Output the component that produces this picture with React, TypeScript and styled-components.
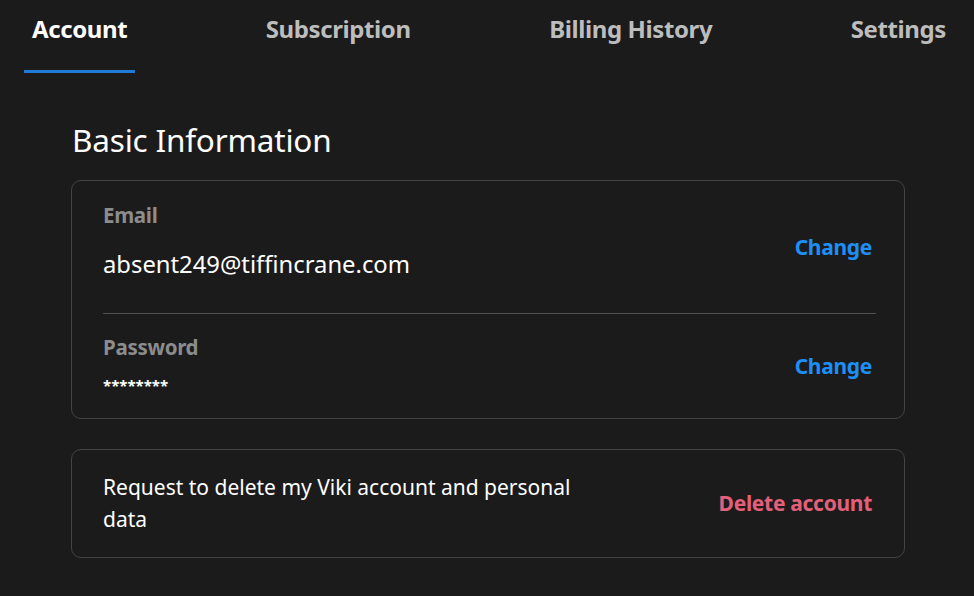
import React from "react";
import styled, { createGlobalStyle } from "styled-components";

const GlobalStyle = createGlobalStyle`
  html, body {
    margin: 0;
    padding: 0;
    background: #1b1b1c;
  }
  body {
    font-family: "Noto Sans", "Open Sans", Arial, sans-serif;
    color: #ffffff;
  }
`;

const Page = styled.div`
  width: 974px;
  min-height: 596px;
  background: #1b1b1c;
  overflow: hidden;
`;

const TabBar = styled.nav`
  display: flex;
  justify-content: space-between;
  align-items: stretch;
  height: 73px;
  padding: 0 20px 0 24px;
  box-sizing: border-box;
`;

const Tab = styled.button<{ $active?: boolean }>`
  background: none;
  border: none;
  margin: 0;
  padding: 12px 8px 0 8px;
  font-family: "Noto Sans", Arial, sans-serif;
  font-size: 24px;
  line-height: 34px;
  font-weight: 700;
  letter-spacing: -0.4px;
  color: ${(p) => (p.$active ? "#ffffff" : "#bdbdbd")};
  border-bottom: 3px solid ${(p) => (p.$active ? "#1f7bd6" : "transparent")};
  display: flex;
  align-items: flex-start;
  cursor: pointer;
`;

const Content = styled.main`
  padding: 47px 69px 0 71px;
`;

const Heading = styled.h2`
  margin: 0 0 20px 1px;
  font-size: 31.5px;
  font-weight: 400;
  line-height: 40px;
  color: #ffffff;
  letter-spacing: -0.2px;
`;

const Card = styled.section`
  border: 1px solid #444446;
  border-radius: 10px;
  padding: 0 28px 0 31px;
  margin-bottom: 30px;
`;

const Row = styled.div<{ $divided?: boolean }>`
  display: flex;
  align-items: center;
  justify-content: space-between;
  border-bottom: ${(p) => (p.$divided ? "1px solid #505052" : "none")};
`;

const InfoBlock = styled.div<{ $pad: string }>`
  display: flex;
  flex-direction: column;
  padding: ${(p) => p.$pad};
`;

const Label = styled.span`
  font-size: 20.5px;
  font-weight: 700;
  line-height: 24px;
  color: #8c8c8c;
  letter-spacing: -0.3px;
`;

const Value = styled.span`
  margin-top: 22px;
  font-size: 23.8px;
  line-height: 30px;
  color: #ffffff;
`;

const Stars = styled.span`
  margin-top: 16px;
  font-size: 15px;
  line-height: 20px;
  color: #ffffff;
  font-weight: 700;
`;

const ActionLink = styled.a<{ $danger?: boolean }>`
  font-size: 21px;
  font-weight: 700;
  letter-spacing: -0.3px;
  color: ${(p) => (p.$danger ? "#e4607a" : "#1e8ff5")};
  text-decoration: none;
  margin-right: 4px;
  cursor: pointer;
`;

const DeleteRow = styled.div`
  display: flex;
  align-items: center;
  justify-content: space-between;
  padding: 21px 0 22px;
`;

const DeleteText = styled.p`
  margin: 0;
  width: 480px;
  font-size: 21px;
  line-height: 32px;
  color: #ffffff;
`;

export default function App() {
  return (
    <Page>
      <GlobalStyle />
      <TabBar>
        <Tab $active>Account</Tab>
        <Tab>Subscription</Tab>
        <Tab>Billing History</Tab>
        <Tab>Settings</Tab>
      </TabBar>
      <Content>
        <Heading>Basic Information</Heading>
        <Card>
          <Row $divided>
            <InfoBlock $pad="22px 0 34px">
              <Label>Email</Label>
              <Value>absent249@tiffincrane.com</Value>
            </InfoBlock>
            <ActionLink>Change</ActionLink>
          </Row>
          <Row>
            <InfoBlock $pad="21px 0 23px">
              <Label>Password</Label>
              <Stars>********</Stars>
            </InfoBlock>
            <ActionLink>Change</ActionLink>
          </Row>
        </Card>
        <Card>
          <DeleteRow>
            <DeleteText>
              Request to delete my Viki account and personal data
            </DeleteText>
            <ActionLink $danger>Delete account</ActionLink>
          </DeleteRow>
        </Card>
      </Content>
    </Page>
  );
}
